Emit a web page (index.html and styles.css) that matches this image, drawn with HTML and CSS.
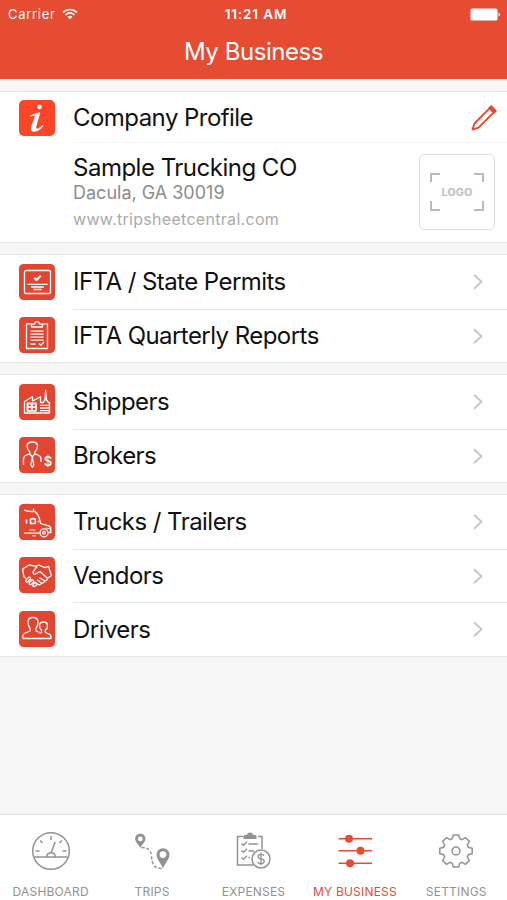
FILE: index.html
```html
<!DOCTYPE html>
<html lang="en">
<head>
    <meta charset="utf-8">
    <title>My Business</title>
    <link rel="stylesheet" href="styles.css">
</head>
<body>
<div class="app">
    <header class="header">
        <div class="status">
            <div class="carrier">
                <span>Carrier</span>
                <svg width="16" height="12" viewBox="0 0 16 12" fill="none" stroke="#fff" stroke-width="1.7">
                    <path d="M1 4.4C5 .5 11 .5 15 4.4M3.5 7C6.3 4.4 9.7 4.4 12.5 7"/>
                    <path d="M5.5 8.7C7 7.4 9 7.4 10.5 8.7L8 11.3z" fill="#fff" stroke="none"/>
                </svg>
            </div>
            <div class="time">11:21 AM</div>
            <svg class="battery" width="31" height="13" viewBox="0 0 31 13" fill="#fff">
                <rect x="0.5" y="0.5" width="27" height="12" rx="1.5"/>
                <path d="M28.5 4.5q1.5.3 1.5 2t-1.5 2z"/>
            </svg>
        </div>
        <h1>My Business</h1>
    </header>

    <main>
        <section class="group">
            <div class="row profile">
                <svg class="icon" viewBox="0 0 36 36">
                    <rect width="36" height="36" rx="5" fill="#fb4526"/>
                    <circle cx="20.5" cy="6.8" r="2.4" fill="#fff"/>
                    <path d="M11 15.5C14.5 14.2 18 12.6 21.3 12.2C20.5 16.5 18.3 22 17.3 26.5C16.5 30 20 29 23.7 24.8L24.7 25.6C21 30.5 17.5 32 14.5 31.7C11 31.2 11.7 28 12.7 25L16 15.8C14.8 15.6 13 16.2 11.4 16.9z" fill="#fff"/>
                </svg>
                <div class="label">Company Profile</div>
                <svg class="pencil" width="26" height="26" viewBox="0 0 26 26" fill="none" stroke="#e34c32" stroke-width="1.9" stroke-linejoin="round">
                    <path d="M1.5 24.5L3.4 18.5L18.7 3.2L22.8 7.3L7.5 22.6z"/>
                    <path d="M18.4 2.9L20.2 1.2L24.8 5.8L23.1 7.6z" fill="#e34c32"/>
                </svg>
            </div>
            <div class="company">
                <div class="details">
                    <div class="name">Sample Trucking CO</div>
                    <div class="city">Dacula, GA 30019</div>
                    <div class="site">www.tripsheetcentral.com</div>
                </div>
                <div class="logo">
                    <svg width="54" height="38" viewBox="0 0 54 38" fill="none" stroke="#b9bbbb" stroke-width="2">
                        <path d="M1 9V1H10M44 1H53V9M53 28V37H44M10 37H1V28"/>
                    </svg>
                    <span>LOGO</span>
                </div>
            </div>
        </section>

        <section class="group">
            <div class="row">
                <svg class="icon" viewBox="0 0 36 36">
                    <rect class="tile" width="36" height="36" rx="4.5"/>
                    <rect x="5.5" y="6.5" width="26" height="23" rx="1.5"/>
                    <path d="M8.5 20.4H28.5M12 23H25M14.5 25.5H22.5"/>
                    <path d="M15.3 13.8L17.5 16L21.8 11.8" stroke-width="2"/>
                </svg>
                <div class="label">IFTA / State Permits</div>
                <svg class="chevron" viewBox="0 0 10 16"><path d="M1 1L8.5 8L1 15"/></svg>
            </div>
            <div class="row">
                <svg class="icon" viewBox="0 0 36 36">
                    <rect class="tile" width="36" height="36" rx="4.5"/>
                    <path d="M13 6.8H7.5V31.5H28.5V6.8H23"/>
                    <path d="M12.5 10V7.2H15.5Q15.8 4.6 18 4.6T20.5 7.2H23.5V10z"/>
                    <path d="M11.5 14.2H24.5M11.5 17.2H24.5M11.5 20.2H24.5M11.5 23.2H24.5M11.5 27H16.5"/>
                    <path d="M20 26.5L21.8 28.2L25 25"/>
                </svg>
                <div class="label">IFTA Quarterly Reports</div>
                <svg class="chevron" viewBox="0 0 10 16"><path d="M1 1L8.5 8L1 15"/></svg>
            </div>
        </section>

        <section class="group">
            <div class="row">
                <svg class="icon" viewBox="0 0 36 36">
                    <rect class="tile" width="36" height="36" rx="4.5"/>
                    <path d="M5.5 29V17.5L13.5 12.8V17L21.5 12.8V18.5H24.5L25.5 16H26L26.6 6.5L27.5 16L29.5 18.5H30.5V29z"/>
                    <path d="M8.5 19.5H17V26.8H8.5zM12.8 19.5V26.8M8.5 23.2H17" stroke-width="1.8"/>
                    <path d="M21 21.4H30M21 24H30M21 26.6H30"/>
                </svg>
                <div class="label">Shippers</div>
                <svg class="chevron" viewBox="0 0 10 16"><path d="M1 1L8.5 8L1 15"/></svg>
            </div>
            <div class="row">
                <svg class="icon" viewBox="0 0 36 36">
                    <rect class="tile" width="36" height="36" rx="4.5"/>
                    <path d="M4.5 28V22Q4.5 19 7.5 18L10.8 16.8V15Q8 12 8 9Q8.3 5 13.3 5T18.6 9Q18.6 12 15.8 15V16.8L19 18Q22 19 22 22V25"/>
                    <path d="M10.8 16.8L13.3 20L15.8 16.8M13.3 20L11.8 28L13.3 30.3L14.8 28z"/>
                    <text x="24.7" y="28.8">$</text>
                </svg>
                <div class="label">Brokers</div>
                <svg class="chevron" viewBox="0 0 10 16"><path d="M1 1L8.5 8L1 15"/></svg>
            </div>
        </section>

        <section class="group">
            <div class="row">
                <svg class="icon" viewBox="0 0 36 36">
                    <rect class="tile" width="36" height="36" rx="4.5"/>
                    <path d="M5 6Q9 8 15.5 7.3Q20 10 21.5 19.5L29.5 21.8Q32 22.5 31.8 25V28.5H29.5M14.5 4.5V7.3M5 29.2H20.5"/>
                    <circle cx="25" cy="28.8" r="4"/>
                    <circle cx="25" cy="28.8" r="1.4"/>
                    <path d="M11.5 15.2Q14 14 16.3 15.2V19.5H11.5zM7.5 15.5V19.5M18.7 17.5H20" stroke-width="1.6"/>
                    <path d="M10.5 26H16.5M13 31.8H17M27 24L31.5 25" stroke-width="1"/>
                </svg>
                <div class="label">Trucks / Trailers</div>
                <svg class="chevron" viewBox="0 0 10 16"><path d="M1 1L8.5 8L1 15"/></svg>
            </div>
            <div class="row">
                <svg class="icon" viewBox="0 0 36 36">
                    <rect class="tile" width="36" height="36" rx="4.5"/>
                    <path d="M3.5 12L10.5 7.8L16 9.2L20 8.2L25.5 10.5L29.5 9.5L32.5 18.5L28.5 21.3L21 14.5L16.5 17Q13.8 17.5 14 15L18 9.5"/>
                    <path d="M3.5 12L5 19.8L7 21.5M28.5 21.3Q28 24 25.7 23.8Q25 26.5 22.5 26Q21 28.8 18.5 27.3L16.5 25.5"/>
                    <path d="M7 23L9.7 20.2Q12 19.7 11.3 22L8.8 25Q6 25.5 7 23zM10.5 25.5L13 22.8Q15.4 22.7 14.6 25L12 27.6Q9.5 27.8 10.5 25.5zM14 27.5L16.2 25.5Q18.5 25.8 17.5 28L15.5 29.5Q13 29.5 14 27.5M20 20.5L25.7 23.8M18 22.8L22.5 26"/>
                </svg>
                <div class="label">Vendors</div>
                <svg class="chevron" viewBox="0 0 10 16"><path d="M1 1L8.5 8L1 15"/></svg>
            </div>
            <div class="row">
                <svg class="icon" viewBox="0 0 36 36">
                    <rect class="tile" width="36" height="36" rx="4.5"/>
                    <path d="M20.5 27.5H4V25.5Q4 22.5 7.5 21.5L11 20V17.3Q9 15 9 11Q9 6.5 14 6.5T19 11Q19 15 17 17.3V20L20.3 21.3"/>
                    <path d="M19.8 27.5H32V26Q32 23.5 29.5 22.8L26.3 21.5V19.3Q28.7 17.5 28.5 14.5Q28.3 11 24.5 11T20.5 14.5Q20.3 17.5 22.5 19.3V21.5L20.5 22.5"/>
                </svg>
                <div class="label">Drivers</div>
                <svg class="chevron" viewBox="0 0 10 16"><path d="M1 1L8.5 8L1 15"/></svg>
            </div>
        </section>
    </main>

    <nav class="tabs">
        <div class="tab">
            <svg viewBox="0 0 40 40">
                <circle cx="20" cy="20" r="18.3"/>
                <path d="M3.3 26H36.7M15.5 26Q16 21.8 20 21.8T24.5 26M20 22L24.2 11"/>
                <path d="M20 5V9M9 9.5L11.5 12M31 9.5L28.5 12M4.5 20H8.5M31.5 20H35.5"/>
            </svg>
            <span>DASHBOARD</span>
        </div>
        <div class="tab">
            <svg viewBox="0 0 40 40">
                <path class="solid" fill-rule="evenodd" d="M8.3 2.5A5.2 5.2 0 0 1 13.5 7.7C13.5 10.5 10 13.5 8.3 17C6.6 13.5 3.1 10.5 3.1 7.7A5.2 5.2 0 0 1 8.3 2.5zM8.3 5.5A2.4 2.4 0 1 0 8.3 10.3A2.4 2.4 0 1 0 8.3 5.5z"/>
                <path class="solid" fill-rule="evenodd" d="M31 17.2A6.5 6.5 0 0 1 37.5 23.7C37.5 28 33 32 31 37.5C29 32 24.5 28 24.5 23.7A6.5 6.5 0 0 1 31 17.2zM31 20.2A3.4 3.4 0 1 0 31 27A3.4 3.4 0 1 0 31 20.2z"/>
                <path d="M9.5 16.5C17 16.5 19 20 19.5 25.5C20 32 21.5 37.5 30 37.5" stroke-dasharray="3 2"/>
            </svg>
            <span>TRIPS</span>
        </div>
        <div class="tab">
            <svg viewBox="0 0 40 40">
                <path d="M10 5.5H4.5V34H20M25 5.5H29V18"/>
                <path class="solid" d="M10.5 8V5Q11 3.8 14 3.8Q14.5 1.5 17 1.5T20 3.8Q23 3.8 23.5 5V8z"/>
                <path d="M8.5 12.5L10.5 14.3L14 10.8M8.5 19.5L10.5 21.3L14 17.8M8.5 26.5L10.5 28.3L14 24.8M15.5 13H25M15.5 20H21M15.5 26.5H17" stroke-width="1.3"/>
                <circle cx="28" cy="28" r="9" fill="#fff"/>
                <path d="M31 24.8Q30.5 23.3 28 23.3Q25.2 23.3 25.2 25.5Q25.2 27.5 28 27.9Q31.2 28.3 31.2 30.5Q31 32.7 28 32.7Q25.2 32.7 24.8 30.8M28 21.5V34.3" stroke-width="1.3"/>
            </svg>
            <span>EXPENSES</span>
        </div>
        <div class="tab active">
            <svg viewBox="0 0 40 40">
                <path d="M3.5 7.7H37M3.5 19.7H37M3.5 32.2H37"/>
                <circle class="solid" cx="14" cy="7.7" r="4"/>
                <circle class="solid" cx="25.5" cy="19.7" r="4"/>
                <circle class="solid" cx="15" cy="32.2" r="4"/>
            </svg>
            <span>MY BUSINESS</span>
        </div>
        <div class="tab">
            <svg viewBox="-20 -20 40 40">
                <path d="M-2.7 -16H2.7L3.7 -12.3L6 -11.3L9.5 -13.3L13.3 -9.5L11.3 -6L12.3 -3.7L16.2 -2.7V2.7L12.3 3.7L11.3 6L13.3 9.5L9.5 13.3L6 11.3L3.7 12.3L2.7 16H-2.7L-3.7 12.3L-6 11.3L-9.5 13.3L-13.3 9.5L-11.3 6L-12.3 3.7L-16.2 2.7V-2.7L-12.3 -3.7L-11.3 -6L-13.3 -9.5L-9.5 -13.3L-6 -11.3L-3.7 -12.3z"/>
                <circle r="4"/>
            </svg>
            <span>SETTINGS</span>
        </div>
    </nav>
</div>
</body>
</html>
```

FILE: styles.css
```css
* {
    box-sizing: border-box;
}
body {
    margin: 0;
    font-family: Inter, "Liberation Sans", sans-serif;
    background-color: #f6f6f6;
    color: #111;
}
.app {
    display: flex;
    flex-direction: column;
    height: 900px;
    overflow: hidden;
}
.header {
    height: 79px;
    background-color: #e64c32;
    color: #fff;
}
.status {
    display: grid;
    grid-template-columns: 1fr auto 1fr;
    align-items: center;
    height: 28px;
    padding: 0 6px 0 8px;
    font-size: 13px;
}
.carrier {
    display: flex;
    align-items: center;
    gap: 6px;
    letter-spacing: 0.7px;
}
.time {
    padding-left: 3px;
    font-size: 13.5px;
    font-weight: 600;
    letter-spacing: 0.9px;
}
.battery {
    justify-self: end;
}
h1 {
    margin: 0;
    font-size: 24px;
    font-weight: 400;
    line-height: 47px;
    letter-spacing: -0.45px;
    text-align: center;
}
main {
    flex: 1;
    padding-top: 12px;
}
.group {
    margin-bottom: 11px;
    background-color: #fff;
    border-top: 1px solid #e3e4e5;
    border-bottom: 1px solid #e3e4e5;
}
.row {
    display: flex;
    align-items: center;
    height: 53.5px;
    padding-left: 19px;
}
.icon {
    width: 36px;
    height: 36px;
    margin-right: 18px;
    fill: none;
    stroke: #fff;
    stroke-width: 1.3;
    stroke-linejoin: round;
}
.icon .tile {
    fill: #e34630;
    stroke: none;
}
.profile .icon {
    stroke: none;
}
.icon text {
    font-size: 13px;
    font-weight: 600;
    fill: #fff;
    stroke: none;
}
.label {
    flex: 1;
    display: flex;
    align-items: center;
    height: 100%;
    font-size: 24px;
    letter-spacing: -0.55px;
    white-space: nowrap;
}
.row + .row .label,
.row + .row .chevron {
    border-top: 1px solid #e9e9e9;
}
.chevron {
    width: 34px;
    height: 100%;
    padding-right: 24px;
    fill: none;
    stroke: #c5c5c8;
    stroke-width: 1.8;
}
.profile {
    height: 50px;
    padding: 1px 10px 0 19px;
}
.company {
    display: flex;
    justify-content: space-between;
    height: 100px;
    margin-left: 73px;
    padding: 11px 12px 0 0;
    border-top: 1px solid #f8f8f8;
}
.name {
    font-size: 24px;
    line-height: 28px;
    letter-spacing: -0.5px;
}
.city {
    font-size: 18px;
    line-height: 22px;
    color: #8c8c8c;
}
.site {
    margin-top: 5px;
    font-size: 16px;
    line-height: 20px;
    letter-spacing: 0.3px;
    color: #aaa;
}
.logo {
    display: grid;
    place-items: center;
    width: 76px;
    height: 76px;
    border: 1.5px solid #dcdfe0;
    border-radius: 5px;
}
.logo > * {
    grid-area: 1 / 1;
}
.logo span {
    font-size: 11px;
    font-weight: 700;
    color: #bfc0c0;
}
.tabs {
    display: grid;
    grid-template-columns: repeat(5, 1fr);
    height: 86px;
    background-color: #fff;
    border-top: 1px solid #dadada;
}
.tab {
    display: flex;
    flex-direction: column;
    align-items: center;
    padding-top: 16px;
    color: #929292;
    font-size: 12px;
    line-height: 16px;
    letter-spacing: 0.2px;
    white-space: nowrap;
}
.tab svg {
    width: 40px;
    height: 40px;
    margin-bottom: 13px;
    fill: none;
    stroke: currentColor;
    stroke-width: 1.5;
}
.tab .solid {
    fill: currentColor;
    stroke: none;
}
.active {
    color: #e64c32;
}
```
